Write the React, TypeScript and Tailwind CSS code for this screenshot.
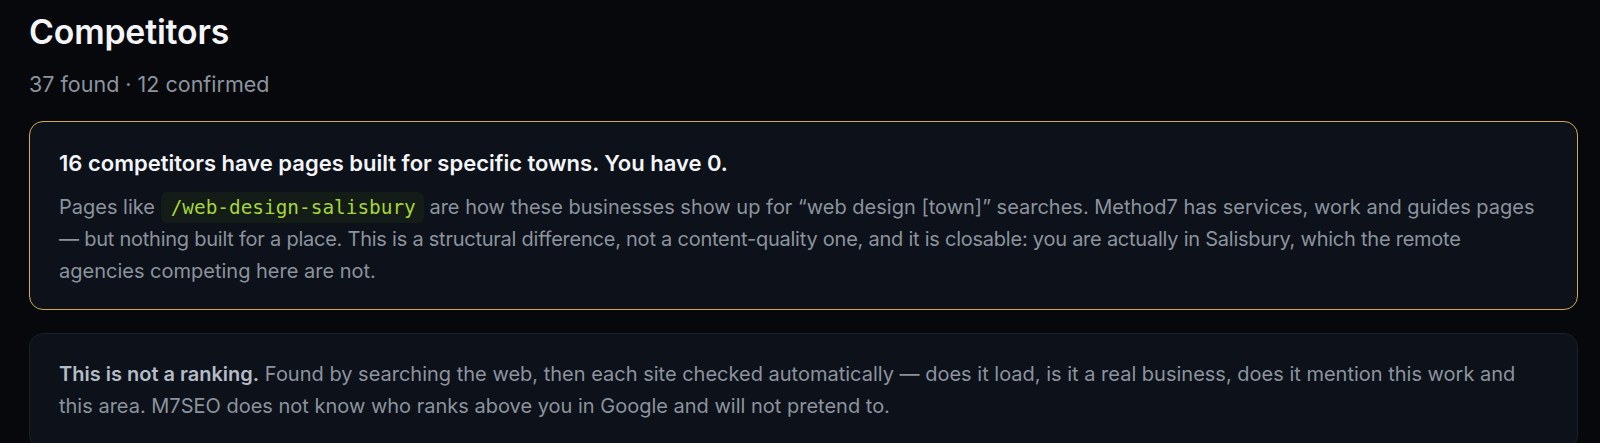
export default function App() {
  return (
    <div className="min-h-screen bg-[#07080b] pl-[29px] pr-[22px] pt-[10px] font-['Inter',sans-serif] antialiased">
      <h1 className="text-[33.8px] leading-[44px] font-semibold text-[#f3f5f8] tracking-[-0.005em]">Competitors</h1>
      <p className="mt-[16px] text-[21.5px] leading-[28px] text-[#8b949e]">37 found · 12 confirmed</p>

      {/* Town pages callout */}
      <div className="mt-[23px] rounded-[14px] border border-[#d6a84c] bg-[#0d1119] px-[29px] pt-[26px] pb-[22px]">
        <h2 className="text-[22px] leading-[30px] font-semibold text-[#f3f5f8]">
          16 competitors have pages built for specific towns. You have 0.
        </h2>
        <p className="mt-[13px] text-[20px] leading-[32px] text-[#8b949e]">
          Pages like{' '}
          <code className="rounded-[6px] bg-[#131c17] pl-[10px] pr-[8px] py-[4px] font-['DejaVu_Sans_Mono',monospace] text-[19.4px] leading-none text-[#a6d633]">
            /web-design-salisbury
          </code>{' '}
          are how these businesses show up for “web design [town]” searches. Method7 has services, work and guides
          pages{' '}
          <span className="tracking-[-0.012em]">
            <span className="whitespace-nowrap">— but</span> nothing built for a place. This is a structural difference,
            not a content-quality one, and it is closable: you are actually in Salisbury, which the remote
          </span>{' '}
          agencies competing here are not.
        </p>
      </div>

      {/* Method note */}
      <div className="mt-[23px] rounded-[14px] border border-[#1a1f28] bg-[#0d1119] px-[29px] pt-[24px] pb-[26px]">
        <p className="text-[20px] leading-[32px] text-[#8b949e]">
          <strong className="font-semibold text-[#b3bcc7]">This is not a ranking.</strong> Found by searching the web,
          then each site checked automatically — does it load, is it a real business, does it mention this work and
          this area. M7SEO does not know who ranks above you in Google and will not pretend to.
        </p>
      </div>
    </div>
  )
}
